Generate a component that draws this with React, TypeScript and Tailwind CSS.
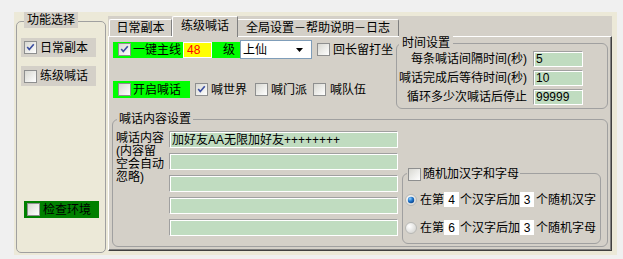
import React from 'react';

function Check({ checked = false }: { checked?: boolean }) {
  return (
    <span className="w-[13px] h-[13px] shrink-0 border border-[#8e8f8f] bg-linear-to-br from-[#d8d8d2] to-white flex items-center justify-center">
      {checked && (
        <svg viewBox="0 0 11 11" className="w-[9px] h-[9px]">
          <path d="M1.5 5 L4 8 L9.5 1.5" stroke="#3b4ea0" strokeWidth="2" fill="none" />
        </svg>
      )}
    </span>
  );
}

function Radio({ selected = false }: { selected?: boolean }) {
  return (
    <svg viewBox="0 0 12 12" className="w-[12px] h-[12px] shrink-0">
      <defs>
        <radialGradient id={selected ? 'rs' : 'ru'} cx="0.35" cy="0.35" r="0.8">
          <stop offset="0" stopColor="#ffffff" />
          <stop offset="1" stopColor="#d0d0cc" />
        </radialGradient>
        <radialGradient id="dot" cx="0.35" cy="0.3" r="0.8">
          <stop offset="0" stopColor="#8fd0ff" />
          <stop offset="0.5" stopColor="#1f74c9" />
          <stop offset="1" stopColor="#0a3f86" />
        </radialGradient>
      </defs>
      <circle cx="6" cy="6" r="5.5" fill={selected ? 'url(#rs)' : 'url(#ru)'} stroke="#b8b8b4" strokeWidth="1" />
      {selected && <circle cx="6" cy="6" r="3.2" fill="url(#dot)" />}
    </svg>
  );
}

function GreenInput({ value = '', className = '' }: { value?: string; className?: string }) {
  return (
    <div
      className={`h-[17px] bg-[#c0dcc0] border border-t-[#a0a0a0] border-l-[#a0a0a0] border-r-white border-b-white shadow-[inset_1px_1px_0_#fff] pl-[2px] flex items-center leading-none ${className}`}
    >
      {value}
    </div>
  );
}

function TimeRow({ label, value }: { label: string; value: string }) {
  return (
    <div className="flex items-center h-[16px]">
      <div className="w-[130px] text-right whitespace-nowrap">{label}</div>
      <GreenInput value={value} className="ml-[6px] w-[50px] !h-[16px] text-[12px]" />
    </div>
  );
}

function RandomRow({ first, last, selected }: { first: string; last: string; selected?: boolean }) {
  return (
    <div className="flex items-center h-[15px] pl-[2px] whitespace-nowrap">
      <Radio selected={selected} />
      <span className="ml-[3px]">在第</span>
      <span className="w-[15px] h-[15px] bg-white flex items-center justify-center">{first}</span>
      <span className="ml-[1px]">个汉字后加</span>
      <span className="w-[14px] h-[15px] bg-white flex items-center justify-center">3</span>
      <span className="ml-[2px]">{last}</span>
    </div>
  );
}

export default function App() {
  return (
    <div className="w-[623px] h-[259px] bg-[#f0f0f0] pt-[12px] pl-[14px] text-[12px] leading-[16px] text-black font-['Liberation_Sans','Noto_Sans_CJK_SC',sans-serif] overflow-hidden">
      <div className="w-[603px] h-[243px] bg-[#ece9d8] flex items-start">
        {/* 功能选择 */}
        <div className="relative ml-[2px] mt-[9px] w-[90px] h-[232px] border border-[#a0a0a0] rounded-[5px] flex flex-col">
          <div className="absolute left-[7px] -top-[10px] h-[16px] px-[3px] bg-[#d4d0c8]">功能选择</div>
          <div className="mt-[16px] ml-[4px] w-[75px] h-[19px] bg-[#d4d0c8] flex items-center pl-[3px]">
            <Check checked />
            <span className="ml-[3px]">日常副本</span>
          </div>
          <div className="mt-[9px] ml-[4px] w-[75px] h-[20px] bg-[#d4d0c8] flex items-center pl-[3px]">
            <Check />
            <span className="ml-[3px]">练级喊话</span>
          </div>
          <div className="mt-[115px] ml-[7px] w-[75px] h-[17px] bg-[#008000] flex items-center pl-[3px]">
            <Check />
            <span className="ml-[3px]">检查环境</span>
          </div>
        </div>

        {/* tab control */}
        <div className="ml-[2px] mt-[4px] w-[504px] h-[235px] bg-[#d4d0c8] flex flex-col">
          <div className="h-[20px] flex items-end pl-[1px]">
            <div className="w-[63px] h-[17px] border-t border-l border-white border-r border-r-[#808080] rounded-tl-[2px] flex items-center justify-center">
              日常副本
            </div>
            <div className="relative z-10 -mb-[1px] w-[66px] h-[21px] bg-[#d4d0c8] border-t border-l border-white border-r border-r-[#808080] rounded-tl-[2px] flex items-center justify-center pb-[2px]">
              练级喊话
            </div>
            <div className="w-[161px] h-[17px] border-t border-white border-r border-r-[#808080] rounded-tr-[2px] flex items-center justify-center">
              全局设置－帮助说明－日志
            </div>
          </div>

          <div className="flex-1 border-t border-l border-white border-r border-b border-r-[#404040] border-b-[#404040] shadow-[inset_-1px_-1px_0_#808080] flex flex-col">
            {/* top section */}
            <div className="h-[82px] flex items-start">
              <div className="w-[287px] pl-[4px] pt-[3px] flex flex-col">
                <div className="h-[19px] flex items-center whitespace-nowrap">
                  <div className="w-[70px] h-[16px] bg-[#00ff00] flex items-center pl-[5px]">
                    <Check checked />
                    <span className="ml-[2px]">一键主线</span>
                  </div>
                  <div className="w-[29px] h-[16px] bg-[#ffff00] border border-white text-[#ff0000] pl-[3px] flex items-center leading-none">
                    48
                  </div>
                  <div className="w-[28px] h-[16px] bg-[#00ff00] pl-[11px] flex items-center">级</div>
                  <div className="w-[72px] h-[19px] bg-white border border-[#7f9db9] flex items-center pl-[2px]">
                    <span className="flex-1">上仙</span>
                    <svg viewBox="0 0 7 4" className="w-[7px] h-[4px] mr-[8px]">
                      <path d="M0 0 H7 L3.5 4 Z" fill="#000" />
                    </svg>
                  </div>
                  <span className="ml-[5px]">
                    <Check />
                  </span>
                  <span className="ml-[3px]">回长留打坐</span>
                </div>
                <div className="mt-[22px] h-[17px] flex items-center whitespace-nowrap">
                  <div className="w-[77px] h-[17px] bg-[#00ff00] flex items-center pl-[5px]">
                    <Check />
                    <span className="ml-[2px]">开启喊话</span>
                  </div>
                  <span className="ml-[5px]">
                    <Check checked />
                  </span>
                  <span className="ml-[3px]">喊世界</span>
                  <span className="ml-[8px]">
                    <Check />
                  </span>
                  <span className="ml-[3px]">喊门派</span>
                  <span className="ml-[6px]">
                    <Check />
                  </span>
                  <span className="ml-[4px]">喊队伍</span>
                </div>
              </div>

              {/* 时间设置 */}
              <div className="relative mt-[6px] w-[212px] h-[66px] border border-[#a0a0a0] rounded-[6px] flex flex-col pt-[7px] gap-[3px]">
                <div className="absolute left-[2px] -top-[9px] h-[16px] px-[3px] bg-[#d4d0c8]">时间设置</div>
                <TimeRow label="每条喊话间隔时间(秒)" value="5" />
                <TimeRow label="喊话完成后等待时间(秒)" value="10" />
                <TimeRow label="循环多少次喊话后停止" value="99999" />
              </div>
            </div>

            {/* 喊话内容设置 */}
            <div className="relative ml-[3px] w-[496px] h-[128px] border border-[#a0a0a0] rounded-[6px] flex items-start">
              <div className="absolute left-[4px] -top-[9px] h-[16px] px-[2px] bg-[#d4d0c8]">喊话内容设置</div>
              <div className="w-[56px] pl-[3px] pt-[12px] leading-[13px]">
                喊话内容
                <br />
                (内容留
                <br />
                空会自动
                <br />
                忽略)
              </div>
              <div className="w-[229px] pt-[11px] flex flex-col gap-[5px]">
                <GreenInput value="加好友AA无限加好友++++++++" />
                <GreenInput />
                <GreenInput />
                <GreenInput />
                <GreenInput />
              </div>
              <div className="relative ml-[4px] mt-[53px] w-[199px] h-[71px] border border-[#a0a0a0] rounded-[6px] flex flex-col">
                <div className="absolute left-[4px] -top-[8px] h-[16px] px-[1px] bg-[#d4d0c8] flex items-center whitespace-nowrap">
                  <Check />
                  <span className="ml-[2px]">随机加汉字和字母</span>
                </div>
                <div className="mt-[18px]">
                  <RandomRow first="4" last="个随机汉字" selected />
                </div>
                <div className="mt-[13px]">
                  <RandomRow first="6" last="个随机字母" />
                </div>
              </div>
            </div>
          </div>
        </div>
      </div>
    </div>
  );
}
